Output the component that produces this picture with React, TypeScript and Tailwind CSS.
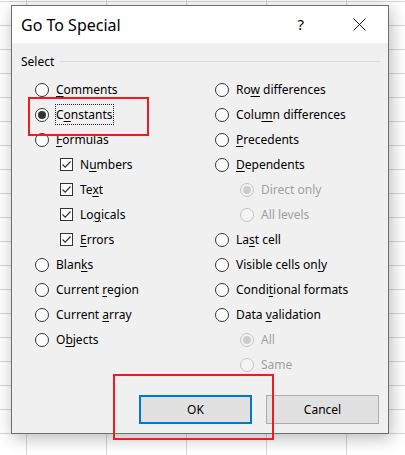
import React from "react";

const F = { fontFamily: '"Noto Sans", "Open Sans", sans-serif' };

function U({ t, i }: { t: string; i: number }) {
  return (
    <>
      {t.slice(0, i)}
      <span className="underline underline-offset-[2px]">{t[i]}</span>
      {t.slice(i + 1)}
    </>
  );
}

function Radio({ checked = false, disabled = false }: { checked?: boolean; disabled?: boolean }) {
  return (
    <span
      className={
        "flex h-[14px] w-[14px] shrink-0 items-center justify-center rounded-full border " +
        (disabled ? "border-[#c4c4c4] bg-[#f4f4f4]" : "border-[#333333] bg-white")
      }
    >
      {checked && (
        <span className={"h-[8px] w-[8px] rounded-full " + (disabled ? "bg-[#cccccc]" : "bg-[#333333]")} />
      )}
    </span>
  );
}

function Check() {
  return (
    <span className="flex h-[13px] w-[13px] shrink-0 items-center justify-center border border-[#333333] bg-white">
      <svg width="11" height="11" viewBox="0 0 11 11">
        <path d="M1.5 5.5 L4.2 8.2 L9.5 2.5" fill="none" stroke="#333333" strokeWidth="1.2" />
      </svg>
    </span>
  );
}

type Item = {
  label: string;
  u?: number;
  kind: "radio" | "check";
  checked?: boolean;
  disabled?: boolean;
  indent?: boolean;
  focus?: boolean;
};

const left: Item[] = [
  { label: "Comments", u: 0, kind: "radio" },
  { label: "Constants", u: 1, kind: "radio", checked: true, focus: true },
  { label: "Formulas", u: 0, kind: "radio" },
  { label: "Numbers", u: 1, kind: "check", indent: true },
  { label: "Text", u: 2, kind: "check", indent: true },
  { label: "Logicals", u: 2, kind: "check", indent: true },
  { label: "Errors", u: 0, kind: "check", indent: true },
  { label: "Blanks", u: 4, kind: "radio" },
  { label: "Current region", u: 8, kind: "radio" },
  { label: "Current array", u: 8, kind: "radio" },
  { label: "Objects", u: 1, kind: "radio" },
];

const right: Item[] = [
  { label: "Row differences", u: 2, kind: "radio" },
  { label: "Column differences", u: 4, kind: "radio" },
  { label: "Precedents", u: 0, kind: "radio" },
  { label: "Dependents", u: 0, kind: "radio" },
  { label: "Direct only", kind: "radio", indent: true, disabled: true, checked: true },
  { label: "All levels", kind: "radio", indent: true, disabled: true },
  { label: "Last cell", u: 2, kind: "radio" },
  { label: "Visible cells only", u: 16, kind: "radio" },
  { label: "Conditional formats", u: 5, kind: "radio" },
  { label: "Data validation", u: 5, kind: "radio" },
  { label: "All", kind: "radio", indent: true, disabled: true, checked: true },
  { label: "Same", kind: "radio", indent: true, disabled: true },
];

function Row({ it }: { it: Item }) {
  return (
    <div className={"flex h-[25px] items-center " + (it.indent ? "pl-[25px]" : "")}>
      {it.kind === "radio" ? <Radio checked={it.checked} disabled={it.disabled} /> : <Check />}
      <span
        className={
          "whitespace-nowrap text-[12px] leading-[17px] " +
          (it.disabled ? "text-[#a0a0a0]" : "text-[#000000]") +
          (it.focus ? " ml-[6px] border border-dotted border-[#222] py-[1px]" : " ml-[7px]")
        }
      >
        {it.u !== undefined ? <U t={it.label} i={it.u} /> : it.label}
      </span>
    </div>
  );
}

export default function App() {
  return (
    <div
      className="relative h-[455px] w-[405px] overflow-hidden bg-white bg-[linear-gradient(to_right,#d6d6d6_1px,transparent_1px),linear-gradient(to_bottom,#d6d6d6_1px,transparent_1px)] bg-[size:80px_24px] bg-[position:26px_1px] pl-[11px] pt-[5px]"
      style={F}
    >
      <div className="flex h-[429px] w-[378px] flex-col border border-[#6e6e6e] bg-[#f0f0f0] shadow-[2px_4px_16px_rgba(0,0,0,0.28)]">
        <div className="flex h-[37px] shrink-0 items-center bg-white pl-[9px]">
          <span className="text-[16px] text-black">Go To Special</span>
          <span className="ml-auto mr-[49px] text-[15px] text-black">?</span>
          <svg className="mr-[22px]" width="13" height="13" viewBox="0 0 13 13">
            <path d="M0.5 0.5 L12.5 12.5 M12.5 0.5 L0.5 12.5" stroke="#111" strokeWidth="1" />
          </svg>
        </div>
        <div className="flex items-center pl-[9px] pr-[8px] pt-[10px]">
          <span className="text-[12px] leading-[17px] text-black">Select</span>
          <span className="ml-[6px] h-px flex-1 bg-[#d9d9d9]" />
        </div>
        <div className="flex pl-[23px] pt-[7px]">
          <div className="flex w-[180px] flex-col">
            {left.map((it) => (
              <Row key={it.label} it={it} />
            ))}
          </div>
          <div className="flex flex-col">
            {right.map((it) => (
              <Row key={it.label} it={it} />
            ))}
          </div>
        </div>
        <div className="mt-auto flex justify-end gap-[14px] pb-[9px] pr-[9px]">
          <button className="flex h-[29px] w-[113px] items-center justify-center border-2 border-[#0078d7] bg-[#e1e1e1] text-[12px] text-black">
            OK
          </button>
          <button className="flex h-[29px] w-[113px] items-center justify-center border border-[#adadad] bg-[#e1e1e1] text-[12px] text-black">
            Cancel
          </button>
        </div>
      </div>
      <div className="absolute left-[28px] top-[97px] h-[39px] w-[121px] border-2 border-[#ec1c24]" />
      <div className="absolute left-[113px] top-[374px] h-[66px] w-[161px] border-2 border-[#ec1c24]" />
    </div>
  );
}
